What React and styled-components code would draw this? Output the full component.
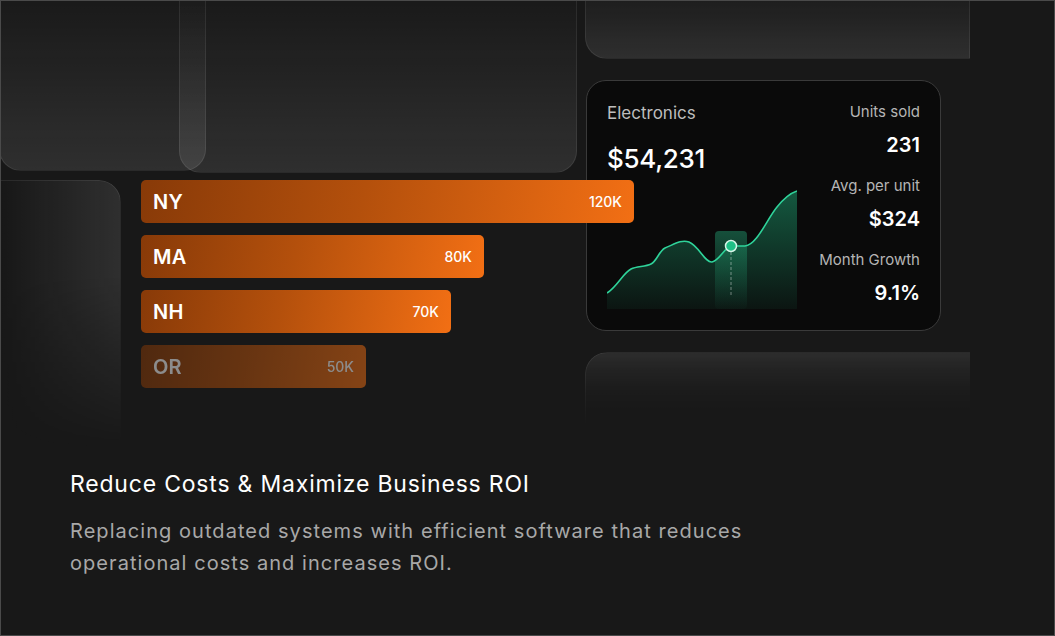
import React from 'react'
import styled, { createGlobalStyle } from 'styled-components'

const GlobalStyle = createGlobalStyle`
  html, body { margin: 0; padding: 0; background: #181818; }
  * { box-sizing: border-box; }
`

const Frame = styled.div`
  width: 1055px;
  height: 636px;
  background: #181818;
  border: 1px solid #4a4a4a;
  overflow: hidden;
  display: flex;
  flex-direction: column;
  font-family: Inter, "Open Sans", sans-serif;
`

const Scene = styled.div`
  position: relative;
  height: 452px;
  flex-shrink: 0;
`

/* decorative backdrop tiles, free-placed behind the content */
const Tile = styled.div`
  position: absolute;
  left: ${({x})=>x}px;
  top: ${({y})=>y}px;
  width: ${({w})=>w}px;
  height: ${({h})=>h}px;
  border-radius: ${({radius})=>radius || '22px'};
  border: 1px solid rgba(255,255,255,0.08);
  background: ${({dir})=>dir === 'right'
    ? 'linear-gradient(90deg, rgba(255,255,255,0) 0%, rgba(255,255,255,0.1) 100%)'
    : 'linear-gradient(180deg, rgba(255,255,255,0) 0%, rgba(255,255,255,0.1) 100%)'};
  ${({fade})=>fade && `
    -webkit-mask-image: linear-gradient(180deg, #000 ${fade}, transparent 100%);
    mask-image: linear-gradient(180deg, #000 ${fade}, transparent 100%);
  `}
`

const TileTop = styled(Tile)`
  background: linear-gradient(180deg, rgba(255,255,255,0.09) 0%, rgba(255,255,255,0.03) 45%, rgba(255,255,255,0) 100%);
  border-right: none;
  border-bottom: none;
  -webkit-mask-image: linear-gradient(180deg, #000 0%, transparent 85%);
  mask-image: linear-gradient(180deg, #000 0%, transparent 85%);
`

const Front = styled.div`
  position: relative;
  z-index: 1;
  display: flex;
  align-items: flex-start;
  padding-left: 140px;
`

const BarList = styled.div`
  width: 445px;
  flex-shrink: 0;
  padding-top: 179px;
  display: flex;
  flex-direction: column;
  gap: 12px;
  position: relative;
  z-index: 2;
`

const Bar = styled.div`
  width: ${({size})=>size}px;
  height: 43px;
  border-radius: 5px;
  padding: 0 12px;
  display: flex;
  align-items: center;
  justify-content: space-between;
  background: linear-gradient(100deg, #883a08 0%, #b4500c 45%, #f26f14 100%);
  opacity: ${({dim})=>dim ? 0.5 : 1};
  color: #ffffff;
`

const BarLabel = styled.span`
  font-size: 20px;
  font-weight: 600;
  letter-spacing: 0.2px;
`

const BarValue = styled.span`
  font-size: 14px;
  font-weight: 500;
`

const Card = styled.div`
  margin-top: 79px;
  width: 355px;
  height: 251px;
  background: #0a0a0a;
  border: 1px solid #3a3a3a;
  border-radius: 20px;
  padding: 21px 20px 20px 20px;
  display: flex;
  justify-content: space-between;
`

const CardMain = styled.div`
  display: flex;
  flex-direction: column;
`

const CardTitle = styled.div`
  font-size: 17px;
  line-height: 22px;
  color: #bdbdbd;
  font-weight: 400;
`

const Amount = styled.div`
  margin-top: 19px;
  font-size: 26px;
  line-height: 32px;
  color: #ffffff;
  font-weight: 500;
  letter-spacing: -0.3px;
`

const Chart = styled.svg`
  margin-top: 14px;
  display: block;
`

const Stats = styled.div`
  display: flex;
  flex-direction: column;
  align-items: flex-end;
  gap: 18px;
`

const Stat = styled.div`
  display: flex;
  flex-direction: column;
  align-items: flex-end;
  gap: 10px;
`

const StatLabel = styled.div`
  font-size: 15px;
  line-height: 20px;
  color: #b5b5b5;
`

const StatValue = styled.div`
  font-size: 20px;
  line-height: 26px;
  color: #ffffff;
  font-weight: 600;
`

const Copy = styled.div`
  padding: 16px 0 0 69px;
`

const Title = styled.h2`
  margin: 0;
  font-size: 23px;
  line-height: 30px;
  font-weight: 400;
  color: #ffffff;
  letter-spacing: 0.8px;
`

const Body = styled.p`
  margin: 16px 0 0 0;
  width: 720px;
  font-size: 20px;
  line-height: 32px;
  color: #a8a8a8;
  font-weight: 400;
  letter-spacing: 1.05px;
`

const bars = [
  { label: 'NY', value: '120K', size: 493 },
  { label: 'MA', value: '80K', size: 343 },
  { label: 'NH', value: '70K', size: 310 },
  { label: 'OR', value: '50K', size: 225, dim: true },
]

const stats = [
  { label: 'Units sold', value: '231' },
  { label: 'Avg. per unit', value: '$324' },
  { label: 'Month Growth', value: '9.1%' },
]

const line = 'M0,104 C10,98 16,84 24,80 C30,77 38,78 44,75 C50,72 52,62 58,59 C66,56 74,50 82,53 C92,57 98,74 105,73 C112,72 118,58 124,57 L138,57 C150,56 160,30 170,18 C178,8 184,4 190,2'

const SalesChart = () => (
  <Chart width="190" height="120" viewBox="0 0 190 120">
    <defs>
      <linearGradient id="area" x1="0" y1="0" x2="0" y2="1">
        <stop offset="0%" stopColor="#22c58a" stopOpacity="0.42" />
        <stop offset="100%" stopColor="#22c58a" stopOpacity="0.06" />
      </linearGradient>
      <linearGradient id="col" x1="0" y1="0" x2="0" y2="1">
        <stop offset="0%" stopColor="#2bd196" stopOpacity="0.35" />
        <stop offset="100%" stopColor="#2bd196" stopOpacity="0.02" />
      </linearGradient>
    </defs>
    <path d={`${line} L190,120 L0,120 Z`} fill="url(#area)" />
    <rect x="108" y="42" width="32" height="78" rx="4" fill="url(#col)" />
    <path d={line} fill="none" stroke="#2fd39a" strokeWidth="1.6" />
    <line x1="124" y1="63" x2="124" y2="108" stroke="rgba(255,255,255,0.35)" strokeWidth="1.2" strokeDasharray="3 2" />
    <circle cx="124" cy="57" r="5.5" fill="#1fbf86" stroke="#d6f5e8" strokeWidth="1.5" />
  </Chart>
)

export default function App() {
  return (
    <Frame>
      <GlobalStyle />
      <Scene>
        <Tile x={-2} y={-22} w={207} h={192} />
        <Tile x={178} y={-22} w={398} h={194} />
        <Tile x={584} y={-22} w={385} h={80} radius="0 0 0 22px" />
        <Tile x={-2} y={179} w={122} h={270} radius="0 22px 0 0" dir="right" fade="35%" />
        <TileTop x={584} y={351} w={385} h={90} radius="22px 0 0 0" />
        <Front>
          <BarList>
            {bars.map(b => (
              <Bar key={b.label} size={b.size} dim={b.dim}>
                <BarLabel>{b.label}</BarLabel>
                <BarValue>{b.value}</BarValue>
              </Bar>
            ))}
          </BarList>
          <Card>
            <CardMain>
              <CardTitle>Electronics</CardTitle>
              <Amount>$54,231</Amount>
              <SalesChart />
            </CardMain>
            <Stats>
              {stats.map(s => (
                <Stat key={s.label}>
                  <StatLabel>{s.label}</StatLabel>
                  <StatValue>{s.value}</StatValue>
                </Stat>
              ))}
            </Stats>
          </Card>
        </Front>
      </Scene>
      <Copy>
        <Title>Reduce Costs &amp; Maximize Business ROI</Title>
        <Body>Replacing outdated systems with efficient software that reduces operational costs and increases ROI.</Body>
      </Copy>
    </Frame>
  )
}
